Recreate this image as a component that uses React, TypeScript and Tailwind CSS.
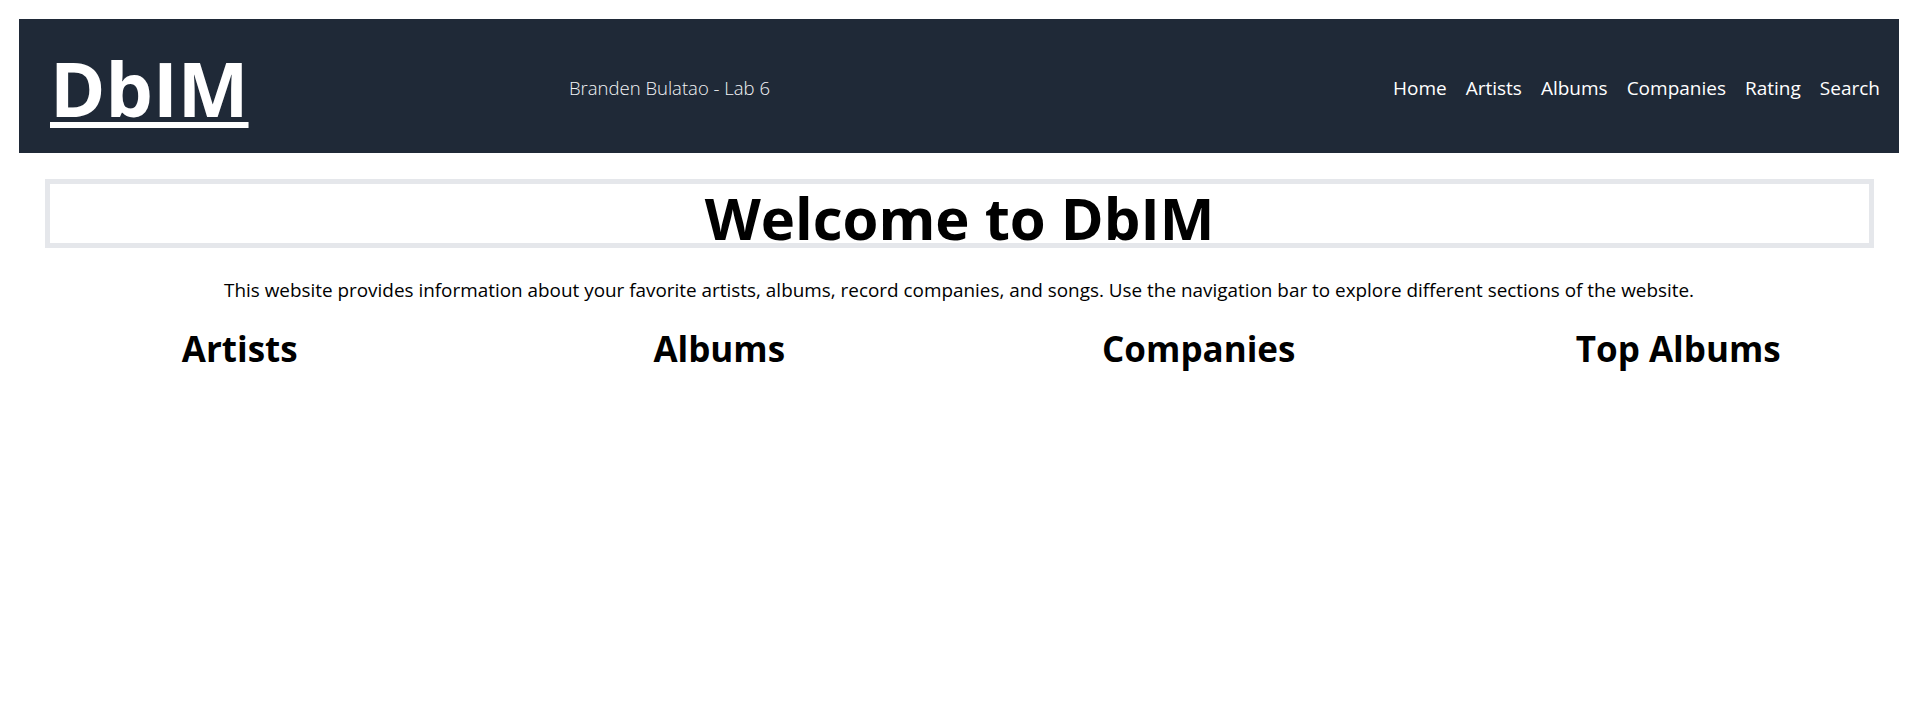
import React from 'react';

const links = ['Home', 'Artists', 'Albums', 'Companies', 'Rating', 'Search'];
const sections = ['Artists', 'Albums', 'Companies', 'Top Albums'];

const Header: React.FC = () => {
  return (
    <nav className="mx-[19px] mt-[19px] h-[134px] pt-[4px] bg-[#1f2937] flex items-center text-white">
      <div className="w-[550px] pl-[31px] shrink-0">
        <a href="#" className="text-[75px] font-bold leading-none underline decoration-[6px] underline-offset-[5px]">
          DbIM
        </a>
      </div>
      <span className="text-[18.5px] font-light text-gray-100">Branden Bulatao - Lab 6</span>
      <div className="ml-auto mr-[19px] flex items-center gap-[19px] text-[19px]">
        {links.map((l) => (
          <a key={l} href="#" className="hover:underline">
            {l}
          </a>
        ))}
      </div>
    </nav>
  );
};

const App: React.FC = () => {
  return (
    <div className="min-h-screen bg-white text-black font-['Open_Sans',sans-serif]">
      <Header />
      <main>
        <div className="ml-[45px] mr-[44px] mt-[26px] h-[69px] border-[5px] border-gray-200 flex justify-center">
          <h1 className="mt-[5px] text-[58px] font-bold leading-none">Welcome to DbIM</h1>
        </div>
        <p className="mt-[28px] text-center text-[18.9px]">
          This website provides information about your favorite artists, albums, record companies, and songs. Use the navigation bar to explore different sections of the website.
        </p>
        <div className="mt-[19px] grid grid-cols-4">
          {sections.map((s) => (
            <h2 key={s} className="text-center text-[35px] font-bold">
              {s}
            </h2>
          ))}
        </div>
      </main>
    </div>
  );
};

export default App;
